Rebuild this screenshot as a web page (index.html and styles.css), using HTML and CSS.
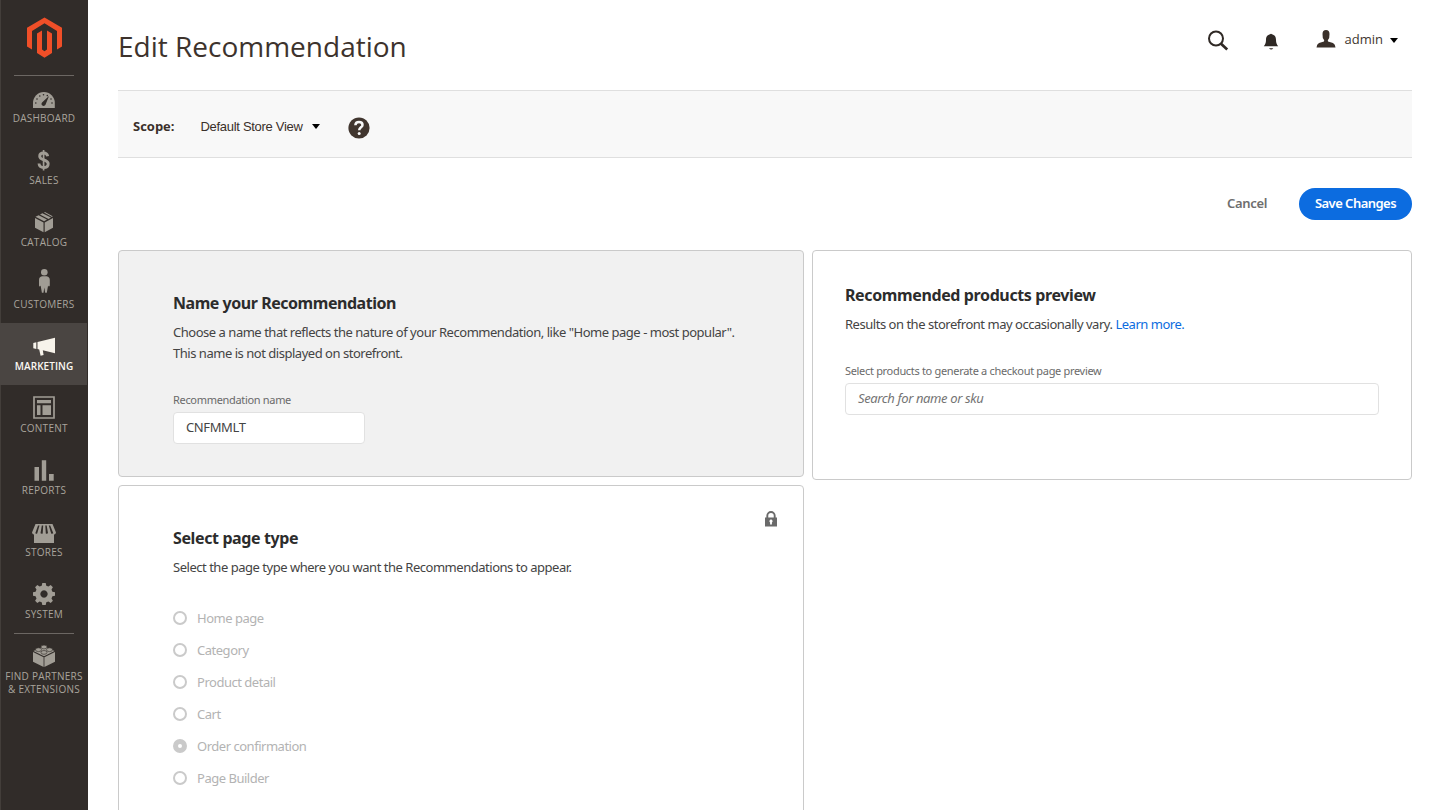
FILE: index.html
```
<!DOCTYPE html>
<html lang="en">
<head>
<meta charset="utf-8">
<title>Edit Recommendation</title>
<link rel="stylesheet" href="styles.css">
</head>
<body>
<div class="app">
  <nav class="sidebar">
    <a class="logo"><svg width="36" height="42" viewBox="0 0 36 42"><path fill="#f04f28" d="M18.5 .5 36 10.8V29.5L31 32.5V14L18.5 6.3 6 14V32.500L1 29.500V10.800ZM11 16.500 16 13.500V32.500L18.500 34.300 21 32.500V13.500L26 16.500V36L18.500 40.800 11 36Z"/></svg></a>
    <ul class="menu">
      <li class="item"><svg class="ico" viewBox="0 0 28 30"><path d="M3 27V22a10.900 10.900 0 0 1 21.800 0V27Z"/><g class="cut"><circle cx="5.800" cy="22" r=".8"/><circle cx="7" cy="18" r=".8"/><circle cx="9.800" cy="15" r=".8"/><circle cx="13.500" cy="13.700" r=".8"/><circle cx="17.300" cy="14.600" r=".8"/><circle cx="21" cy="18" r=".8"/><circle cx="22" cy="22" r=".8"/><path d="M19 15 15.600 23.500a2.100 2.100 0 1 1-3.300-2.300Z"/></g></svg><span>DASHBOARD</span></li>
      <li class="item"><svg class="ico" viewBox="0 0 28 30"><path class="line" d="M17.700 13.300C17.300 11 15.700 10 13.600 10 11.300 10 9.700 11.200 9.700 13.200c0 4.600 8.500 2.600 8.500 7.500 0 2.500-2 3.800-4.500 3.800-2.800 0-4.500-1.500-4.700-4" stroke-width="2.900"/><path class="line" d="M13.600 7V27.500" stroke-width="1.700"/></svg><span>SALES</span></li>
      <li class="item"><svg class="ico" viewBox="0 0 28 30"><path d="M5 13 13.500 17.500V27.300L5 22.800ZM23 13 14.700 17.500V27.300L23 22.800ZM5.500 11.800 8.600 10.200 17 14.600 14.100 16.300ZM10 9.400 12.400 8.200 21 12.600 18.500 13.900ZM14 7.500 15 7 22.700 11.300 22 11.900Z"/></svg><span>CATALOG</span></li>
      <li class="item"><svg class="ico" viewBox="0 0 28 30"><circle cx="14.300" cy="5.300" r="3.300"/><path d="M12 9.300H16.700Q19.700 10 19.800 13V18.500Q19 20.500 18 18.500V19L16.800 25.700H15.200L14.300 20.500 13.500 25.700H11.900L10.700 19V18.500Q9.500 20.500 9 18.500V13Q9 10 12 9.300Z"/></svg><span>CUSTOMERS</span></li>
      <li class="item active"><svg class="ico" viewBox="0 0 28 30"><path d="M3.300 14 6.300 13.300V20L3.300 19.200ZM7.500 13 25 8.800V24.200L12.800 21.300 13.600 26 10.600 26.800 9.200 20.500 7.500 20.100Z"/></svg><span>MARKETING</span></li>
      <li class="item"><svg class="ico" viewBox="0 0 28 30"><path class="line" stroke-width="1.700" d="M4 6H24V27H4Z"/><path d="M7 9H21V12.200H7ZM7 14.300H10.500V24H7ZM12.500 14.300H21V24H12.500Z"/></svg><span>CONTENT</span></li>
      <li class="item"><svg class="ico" viewBox="0 0 28 30"><path d="M4.500 14H9V27.700H4.500ZM11.800 7.300H16.200V27.700H11.800ZM19 21H23.700V27.700H19Z"/></svg><span>REPORTS</span></li>
      <li class="item"><svg class="ico" viewBox="0 0 28 30"><path d="M5.500 9H22.500L26 17.500Q25.500 19.700 24 19.500V28H4V19.500Q2.500 19.700 2 17.500Z"/><g class="cut"><path d="M8 10.500H9.500L7.200 18.500Q6 19 5.300 18.300ZM11.800 10.500H13.200L12.700 18.500Q11.500 19 10.500 18.300ZM15.300 10.500H16.700L18 18.300Q17 19 15.800 18.500ZM18.800 10.500H20.200L23.300 18.300Q22.300 19 21.200 18.500Z"/></g></svg><span>STORES</span></li>
      <li class="item"><svg class="ico" viewBox="0 0 28 30"><path fill-rule="evenodd" d="M12.300 6H15.700L16.300 8.700 18.400 9.600 20.700 8.100 22.900 10.300 21.500 12.600 22.400 14.700 25 15.300V18.700L22.400 19.300 21.500 21.400 22.900 23.700 20.700 25.900 18.400 24.400 16.300 25.300 15.700 28H12.300L11.700 25.300 9.600 24.400 7.300 25.900 5.100 23.700 6.500 21.400 5.600 19.300 3 18.700V15.300L5.600 14.700 6.500 12.600 5.100 10.300 7.300 8.100 9.600 9.600 11.700 8.700ZM14 13.300a3.700 3.700 0 1 0 .01 0Z"/></svg><span>SYSTEM</span></li>
      <li class="item ruled"><svg class="ico" viewBox="0 0 28 30"><path d="M3 13 13.600 18.200V28L3 22.800ZM25 13 14.400 18.200V28L25 22.800ZM3.500 12 14 7.300 24.500 12 14 17.200Z"/><g class="stud"><ellipse cx="14" cy="8" rx="3" ry="1.900"/><ellipse cx="8.500" cy="10.700" rx="3" ry="1.900"/><ellipse cx="19.500" cy="10.700" rx="3" ry="1.900"/><ellipse cx="14" cy="13.400" rx="3" ry="1.900"/></g></svg><span>FIND PARTNERS<br>&amp; EXTENSIONS</span></li>
    </ul>
  </nav>
  <main class="main">
    <header class="top">
      <h1>Edit Recommendation</h1>
      <div class="tools">
        <svg class="search" width="22" height="22" viewBox="0 0 22 22"><circle cx="9" cy="8.500" r="7" fill="none" stroke="#2f2925" stroke-width="2"/><path d="M13.800 13.500 20.200 19.600" stroke="#2f2925" stroke-width="2.700"/></svg>
        <svg class="bell" width="16" height="18" viewBox="0 0 16 18"><path fill="#2f2925" d="M7 1.200Q8 .2 9 1.200C12.300 2 13 4.500 13 7c0 3 .8 4.500 2.200 6.300H.8C2.200 11.500 3 10 3 7c0-2.500.7-5 4-5.800ZM6 15.200H10.300Q8.200 17.800 6 15.200Z"/></svg>
        <svg class="user" width="20" height="18" viewBox="0 0 20 18"><path fill="#3a302a" d="M6.500 4Q6.500 0 10 0T13.500 4Q13.800 8 11.800 10.200L12 11.500 17 13Q19.300 14 19.500 17.500H.5Q.7 14 3 13L8 11.500 8.200 10.200Q6.200 8 6.500 4Z"/></svg>
        <span class="admin">admin</span>
        <i class="caret"></i>
      </div>
    </header>
    <section class="scope">
      <b>Scope:</b><span class="store">Default Store View</span><i class="caret"></i>
      <svg class="help" width="22" height="22" viewBox="0 0 22 22"><circle cx="11" cy="11" r="10.600" fill="#41362f"/><path fill="none" stroke="#f8f8f8" stroke-width="2.500" d="M7.400 8.200C7.500 6 9 5 11 5c2.200 0 3.500 1.100 3.500 2.900 0 2.300-3.300 2.600-3.300 5.300"/><circle cx="11.200" cy="16.500" r="1.500" fill="#f8f8f8"/></svg>
    </section>
    <div class="actions"><span class="cancel">Cancel</span><button class="save">Save Changes</button></div>
    <div class="grid">
      <div class="col">
        <section class="panel name">
          <h2 class="wide">Name your Recommendation</h2>
          <p>Choose a name that reflects the nature of your Recommendation, like "Home page - most popular".<br>This name is not displayed on storefront.</p>
          <label>Recommendation name</label>
          <div class="field value">CNFMMLT</div>
        </section>
        <section class="panel type">
          <svg class="lock" width="12" height="16" viewBox="0 0 12 16"><path fill="none" stroke="#6a6a6a" stroke-width="1.900" d="M2.300 7V4.700a3.700 3.700 0 0 1 7.400 0V7"/><path fill="#6a6a6a" fill-rule="evenodd" d="M0 6.500H12V15.500H0ZM6 8.600a1.600 1.600 0 0 0-.9 2.900V13.400H6.900V11.500A1.600 1.600 0 0 0 6 8.600Z"/></svg>
          <h2>Select page type</h2>
          <p>Select the page type where you want the Recommendations to appear.</p>
          <ul class="radios">
            <li><i></i>Home page</li>
            <li><i></i>Category</li>
            <li><i></i>Product detail</li>
            <li><i></i>Cart</li>
            <li class="on"><i></i>Order confirmation</li>
            <li><i></i>Page Builder</li>
          </ul>
        </section>
      </div>
      <section class="panel preview">
        <h2>Recommended products preview</h2>
        <p>Results on the storefront may occasionally vary. <a>Learn more.</a></p>
        <label>Select products to generate a checkout page preview</label>
        <div class="field hint">Search for name or sku</div>
      </section>
    </div>
  </main>
</div>
</body>
</html>
```
FILE: styles.css
```
* { box-sizing: border-box; }
body { margin: 0; background: #fff; font-family: "Noto Sans", "Open Sans", sans-serif; color: #444; }
h1, h2, p, ul { margin: 0; padding: 0; }
ul { list-style: none; }
svg { display: block; }
.app { display: flex; height: 810px; overflow: hidden; }

.sidebar { width: 88px; flex: none; background: #312c29; box-shadow: inset 1px 0 #433e3a; }
.logo { display: flex; height: 75px; padding: 17px 0 0 26px; }
.menu::before { content: ""; display: block; width: 60px; height: 1px; margin: 0 14px -1px; background: #6c6763; }
.item { height: 62px; padding-top: 6px; display: flex; flex-direction: column; align-items: center; color: #a9a49c; font: 10px/13px "Open Sans", sans-serif; letter-spacing: .25px; text-align: center; white-space: nowrap; }
.item span { margin-top: 1px; }
.ico { width: 28px; height: 30px; flex: none; fill: #a19d95; }
.ico .cut { fill: #312c29; }
.ico .line { fill: none; stroke: #a19d95; }
.ico .stud { stroke: #312c29; stroke-width: .6; }
.item.active { background: #4a4542; color: #fbf8f2; font-weight: 600; letter-spacing: .05px; border-right: 1px solid #312c29; padding-left: 1px; }
.item.active .ico { fill: #f7f3eb; }
.item.ruled::before { content: ""; width: 60px; height: 1px; margin: -6px 0 5px; flex: none; background: #6c6763; }

.main { flex: 1; padding: 0 30px; min-width: 0; }
.top { height: 90px; display: flex; justify-content: space-between; }
h1 { margin-top: 27px; font: 400 28px/38px "Open Sans", sans-serif; color: #3d332d; white-space: nowrap; }
.tools { display: flex; padding-right: 14px; }
.search { margin: 30px 34px 0 0; }
.bell { margin: 33px 37px 0 0; }
.user { margin: 30px 9px 0 0; }
.admin { margin: 30px 7px 0 0; font: 13px/18px "Open Sans", sans-serif; color: #41362f; }
.caret { width: 8px; height: 5px; background: #000; clip-path: polygon(0 0, 100% 0, 50% 100%); }
.tools .caret { margin-top: 38px; }
.scope { height: 68px; display: flex; align-items: center; padding: 5px 15px 0; background: #f8f8f8; border: solid #dfdfdf; border-width: 1px 0; color: #3a302a; }
.scope b { width: 68px; margin-top: -2px; font: 700 13px/18px "Open Sans", sans-serif; }
.store { width: 111px; font: 13px/18px "Liberation Sans", sans-serif; letter-spacing: -.3px; text-indent: -.5px; white-space: nowrap; }
.help { margin: 3px 0 0 28px; }
.actions { height: 92px; padding-top: 30px; display: flex; justify-content: flex-end; font-size: 13px; line-height: 30px; font-weight: 600; }
.cancel { margin-right: 32px; color: #6e6e6e; letter-spacing: -.35px; }
.save { width: 113px; height: 32px; padding: 0 0 2px; border: 0; border-radius: 16px; background: #0c6ce0; color: #fff; font: 600 13px/30px "Noto Sans", sans-serif; letter-spacing: -.53px; }

.grid { display: grid; grid-template-columns: 686px 600px; gap: 8px; align-items: start; }
.col { display: grid; grid-template-columns: 100%; gap: 8px; }
.panel { position: relative; border: 1px solid #cacaca; border-radius: 4px; background: #fff; white-space: nowrap; }
.name { height: 227px; padding: 40px 54px; background: #f1f1f1; }
.type { height: 400px; padding: 40px 54px; }
.preview { height: 230px; padding: 32px; }
h2 { font-size: 16px; line-height: 24px; font-weight: 700; color: #2c2c2c; letter-spacing: -.38px; }
h2.wide { letter-spacing: -.46px; }
p { margin-top: 7px; font-size: 13px; line-height: 21px; letter-spacing: -.475px; }
a { color: #0c6ce0; }
label { display: block; margin-top: 27px; font-size: 11px; line-height: 18px; letter-spacing: -.32px; color: #6a6a6a; }
.field { height: 32px; margin-top: 3px; padding: 0 12px; border: 1px solid #e1e1e1; border-radius: 4px; background: #fff; font-size: 13px; line-height: 29px; letter-spacing: -.38px; }
.value { width: 192px; }
.hint { font-style: italic; color: #747474; }
.lock { position: absolute; right: 26px; top: 25px; }
.radios { margin-top: 24px; font-size: 13px; letter-spacing: -.48px; color: #b3b3b3; }
.radios li { height: 32px; display: flex; align-items: center; }
.radios i { width: 14px; height: 14px; margin-right: 10px; border: 2px solid #cacaca; border-radius: 50%; }
.radios .on i { border-width: 5px; }
```
